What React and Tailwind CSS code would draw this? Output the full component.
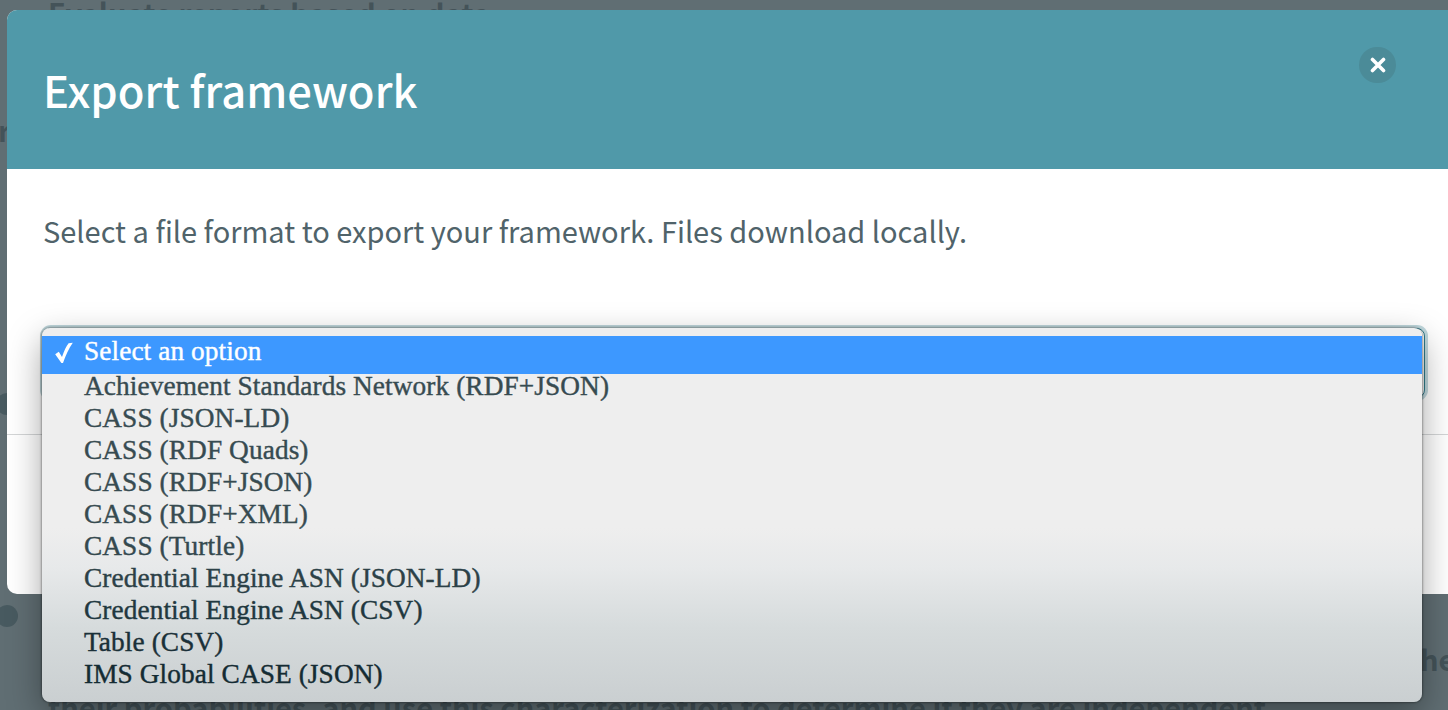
const options = [
  { label: 'Achievement Standards Network (RDF+JSON)', tone: 'text-[#374b51]' },
  { label: 'CASS (JSON-LD)', tone: 'text-[#374b51]' },
  { label: 'CASS (RDF Quads)', tone: 'text-[#374b51]' },
  { label: 'CASS (RDF+JSON)', tone: 'text-[#374b51]' },
  { label: 'CASS (RDF+XML)', tone: 'text-[#374b51]' },
  { label: 'CASS (Turtle)', tone: 'text-[#34494f]' },
  { label: 'Credential Engine ASN (JSON-LD)', tone: 'text-[#2c4147]' },
  { label: 'Credential Engine ASN (CSV)', tone: 'text-[#21383f]' },
  { label: 'Table (CSV)', tone: 'text-[#1a3038]' },
  { label: 'IMS Global CASE (JSON)', tone: 'text-[#142b33]' },
];

function Backdrop() {
  return (
    <div className="absolute inset-0 overflow-hidden bg-[#606e73] text-[29px] leading-[40px] font-bold whitespace-nowrap text-[#445359]">
      <p className="absolute top-[-8px] left-[48px] tracking-[0.05px]">Evaluate reports based on data</p>
      <p className="absolute top-[109px] left-[-2px]">r</p>
      <span className="absolute top-[393px] left-[-4px] size-[22px] rounded-full bg-[#485a60]" />
      <span className="absolute top-[605px] left-[-4px] size-[22px] rounded-full bg-[#485a60]" />
      <p className="absolute top-[638px] left-[1420px]">he</p>
      <p className="absolute top-[686px] left-[48px] tracking-[0.02px]">
        their probabilities, and use this characterization to determine if they are independent.
      </p>
    </div>
  );
}

function OptionMenu() {
  return (
    <ul className="absolute -top-px left-[-2px] h-[374px] w-[1380px] overflow-hidden rounded-[8px] bg-[linear-gradient(to_bottom,#eeeeee_0px,#eeeeee_200px,#e7e9ea_240px,#d6dbdc_300px,#cacfd1_374px)] pt-2 font-['Liberation_Serif',serif] text-[27.3px] tracking-[0.1px] whitespace-nowrap shadow-[0_12px_34px_rgba(0,0,0,0.36),0_0_2px_1px_rgba(0,0,0,0.3)] [-webkit-text-stroke:0.4px_currentColor]">
      <li className="flex h-[38px] items-start bg-[#3d98ff] pl-[12px] leading-[30px] text-white">
        <svg className="mt-[6px] mr-[10px] h-[22px] w-[20px]" viewBox="0 0 20 22" fill="currentColor">
          <path d="M1.200 12.200 4.800 9.800 8 15C10.300 8.500 12.200 4 14.600 1.200L18.800.8C14.800 6.500 11.600 13.500 9 21L7.400 21Z" />
        </svg>
        Select an option
      </li>
      {options.map(({ label, tone }) => (
        <li key={label} className={`h-8 pl-[42px] leading-[24px] ${tone}`}>
          {label}
        </li>
      ))}
    </ul>
  );
}

export default function App() {
  return (
    <div className="relative h-[710px] w-full overflow-hidden font-['Noto_Sans_CJK_SC',sans-serif]">
      <Backdrop />
      <section className="relative mt-[10px] ml-[7px] flex h-[584px] w-[1460px] flex-col rounded-[10px] bg-white">
        <header className="flex h-[159px] shrink-0 items-start justify-between rounded-tl-[10px] bg-[#5099a9] pr-[71px] pl-[36px]">
          <h1 className="pt-[50px] text-[43.5px] leading-[60px] font-medium tracking-[0.04px] whitespace-nowrap text-white">
            Export framework
          </h1>
          <button aria-label="Close" className="mt-[37px] flex h-[36px] w-[37px] items-center justify-center rounded-full bg-[#4b8b98]">
            <svg className="size-4" viewBox="0 0 16 16" stroke="white" strokeWidth="3.6" strokeLinecap="round">
              <path d="M2.500 2.500 13.500 13.500M13.500 2.500 2.500 13.500" />
            </svg>
          </button>
        </header>
        <div className="flex h-[265px] shrink-0 flex-col items-start gap-[77px] pt-[40px] pl-[36px]">
          <p className="text-[29px] leading-[42px] whitespace-nowrap text-[#50636a]">
            Select a file format to export your framework. Files download locally.
          </p>
          <div className="relative z-10 h-[70px] w-[1382px] rounded-[8px] border border-[#2f7b8b] bg-white ring-3 ring-[#c0d8dd]">
            <OptionMenu />
          </div>
        </div>
        <footer className="border-t border-[#d4d6d7]" />
      </section>
    </div>
  );
}
